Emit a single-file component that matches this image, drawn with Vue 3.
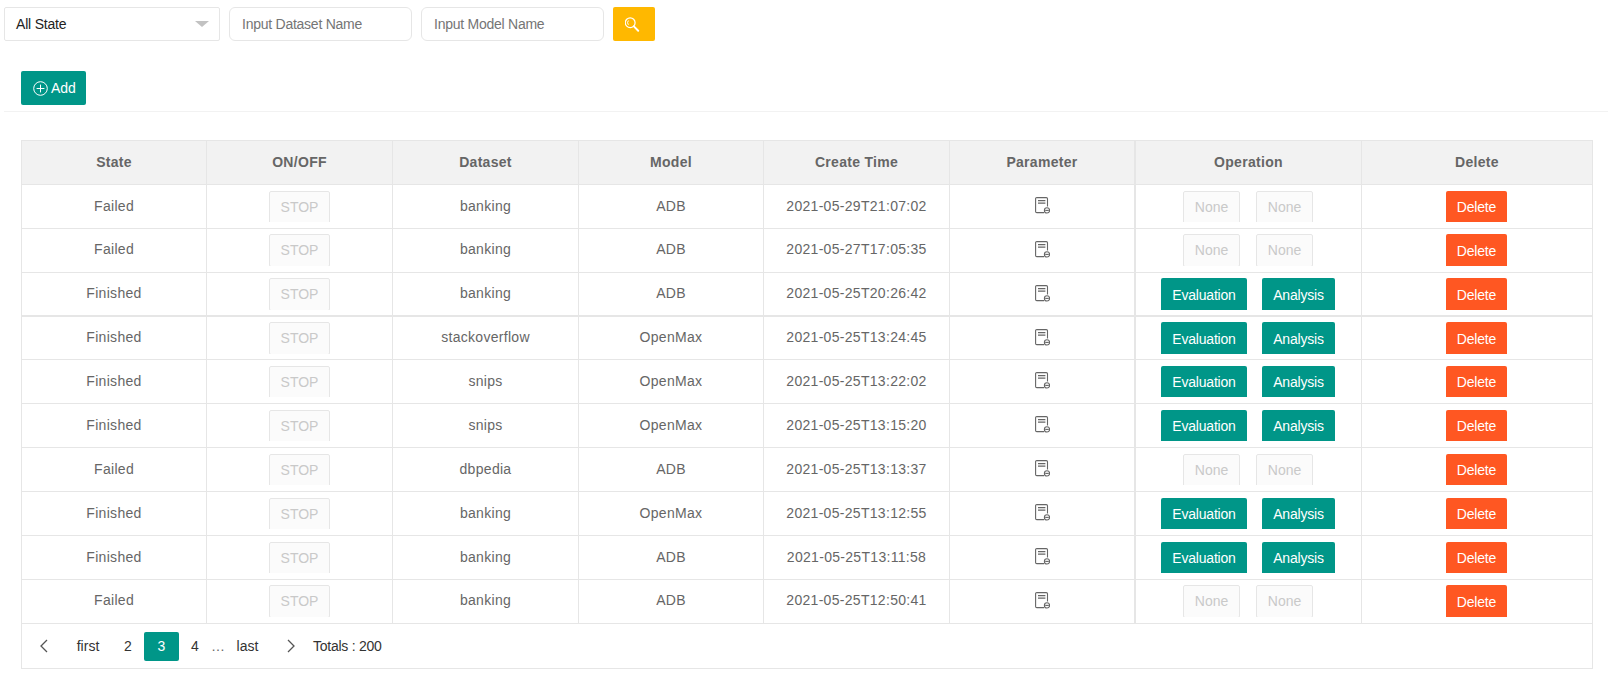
<template>
  <div class="page">
    <div class="search-bar">
      <div class="state-select">
        <span>All State</span>
        <i class="caret"></i>
      </div>
      <input class="text-input" type="text" placeholder="Input Dataset Name" />
      <input class="text-input" type="text" placeholder="Input Model Name" />
      <button class="search-btn" type="button">
        <svg width="18" height="18" viewBox="0 0 18 18" fill="none" stroke="#fff">
          <circle cx="5.2" cy="7.7" r="4.9" stroke-width="1.2" />
          <path d="M8.9 11.4l4.3 4.3" stroke-width="2" stroke-linecap="round" />
          <path d="M3.4 5.6a3.2 3.2 0 0 0 0 4.2" stroke-width="1" />
        </svg>
      </button>
    </div>

    <div class="tool-bar">
      <button class="add-btn" type="button">
        <svg width="15" height="15" viewBox="0 0 15 15" fill="none" stroke="#fff" stroke-width="1">
          <circle cx="7.5" cy="7.5" r="6.8" />
          <path d="M7.5 3.6v7.8M3.6 7.5h7.8" />
        </svg>
        Add
      </button>
    </div>

    <div class="table">
      <div class="row head">
        <div v-for="title in columns" :key="title" class="cell">{{ title }}</div>
      </div>

      <div
        v-for="(job, i) in jobs"
        :key="i"
        class="row"
        :class="{
          thick: i === 2,
          short: i === 3,
          low: i === 0 || (i >= 4 && i <= 8),
          raised: i === 1 || i === 9,
        }"
      >
        <div class="cell">{{ job.state }}</div>
        <div class="cell btn-cell">
          <div class="clip"><button class="btn off stop" type="button">STOP</button></div>
        </div>
        <div class="cell">{{ job.dataset }}</div>
        <div class="cell">{{ job.model }}</div>
        <div class="cell">{{ job.time }}</div>
        <div class="cell icon-cell">
          <svg width="15" height="17" viewBox="0 0 15 17" fill="none" stroke="#666" stroke-width="1.1">
            <path d="M12.5 9.6V1.8a1.2 1.2 0 0 0-1.2-1.2H1.8A1.2 1.2 0 0 0 .6 1.8v12.6a1.2 1.2 0 0 0 1.2 1.2h7.4" />
            <path d="M3 3.6h7.4M3 6.2h7.4" stroke-width="1.3" />
            <circle cx="12" cy="13.4" r="2.6" />
            <path d="M10.2 13.4h3.6" />
          </svg>
        </div>
        <div class="cell btn-cell">
          <div v-if="job.state === 'Finished'" class="clip ops">
            <button class="btn teal eval" type="button">Evaluation</button>
            <button class="btn teal analysis" type="button">Analysis</button>
          </div>
          <div v-else class="clip ops none">
            <button class="btn off none-btn" type="button">None</button>
            <button class="btn off none-btn" type="button">None</button>
          </div>
        </div>
        <div class="cell btn-cell">
          <div class="clip shift"><button class="btn orange" type="button">Delete</button></div>
        </div>
      </div>

      <div class="pager">
        <a class="pg prev">
          <svg width="10" height="16" viewBox="0 0 10 16" fill="none" stroke="#555" stroke-width="1.3"><path d="M8 2L2 8l6 6" /></svg>
        </a>
        <a class="pg first-link">first</a>
        <a class="pg num before">2</a>
        <a class="pg current">3</a>
        <a class="pg num after">4</a>
        <span class="dots">…</span>
        <a class="pg last-link">last</a>
        <a class="pg next">
          <svg width="10" height="16" viewBox="0 0 10 16" fill="none" stroke="#555" stroke-width="1.3"><path d="M2 2l6 6-6 6" /></svg>
        </a>
        <span class="totals">Totals : 200</span>
      </div>
    </div>
  </div>
</template>

<script setup>
const columns = ["State", "ON/OFF", "Dataset", "Model", "Create Time", "Parameter", "Operation", "Delete"];

const jobs = [
  { state: "Failed", dataset: "banking", model: "ADB", time: "2021-05-29T21:07:02" },
  { state: "Failed", dataset: "banking", model: "ADB", time: "2021-05-27T17:05:35" },
  { state: "Finished", dataset: "banking", model: "ADB", time: "2021-05-25T20:26:42" },
  { state: "Finished", dataset: "stackoverflow", model: "OpenMax", time: "2021-05-25T13:24:45" },
  { state: "Finished", dataset: "snips", model: "OpenMax", time: "2021-05-25T13:22:02" },
  { state: "Finished", dataset: "snips", model: "OpenMax", time: "2021-05-25T13:15:20" },
  { state: "Failed", dataset: "dbpedia", model: "ADB", time: "2021-05-25T13:13:37" },
  { state: "Finished", dataset: "banking", model: "OpenMax", time: "2021-05-25T13:12:55" },
  { state: "Finished", dataset: "banking", model: "ADB", time: "2021-05-25T13:11:58" },
  { state: "Failed", dataset: "banking", model: "ADB", time: "2021-05-25T12:50:41" },
];
</script>

<style>
body {
  background: #fff;
}
</style>

<style scoped>
.page {
  font-family: "Liberation Sans", Arial, sans-serif;
  font-size: 14px;
  color: #666;
  height: 682px;
  overflow: hidden;
}

button {
  font-family: inherit;
  border: none;
  padding: 0;
}

.search-bar {
  display: flex;
  align-items: center;
  gap: 9px;
  padding: 7px 0 0 4px;
}

.state-select {
  position: relative;
  box-sizing: border-box;
  width: 216px;
  height: 34px;
  line-height: 32px;
  padding-left: 11px;
  letter-spacing: -0.2px;
  border: 1px solid #e6e6e6;
  border-radius: 2px;
  color: #222;
}

.caret {
  position: absolute;
  right: 10px;
  top: 13px;
  border-style: solid;
  border-width: 6px 7px 0;
  border-color: #c2c2c2 transparent transparent;
}

.text-input {
  box-sizing: border-box;
  width: 183px;
  height: 34px;
  padding: 0 12px;
  font-family: inherit;
  font-size: 14px;
  letter-spacing: -0.25px;
  border: 1px solid #e6e6e6;
  border-radius: 6px;
  outline: none;
}

.text-input::placeholder {
  color: #757575;
}

.search-btn {
  width: 42px;
  height: 34px;
  background: #ffb800;
  border-radius: 2px;
  display: flex;
  align-items: center;
  justify-content: center;
}

.tool-bar {
  margin: 30px 0 0 4px;
  padding: 0 0 6px 17px;
  border-bottom: 1px solid #f2f2f2;
}

.add-btn {
  display: flex;
  align-items: center;
  gap: 3px;
  box-sizing: border-box;
  width: 65px;
  height: 34px;
  padding-left: 12px;
  font-size: 14px;
  letter-spacing: -0.1px;
  color: #fff;
  background: #009688;
  border-radius: 2px;
}

.table {
  box-sizing: border-box;
  width: 1572px;
  margin: 28px 0 0 21px;
  border: 1px solid #e6e6e6;
}

.row {
  display: grid;
  grid-template-columns: 185px 186px 186px 185px 186px 186px 226px 230px;
  height: 44px;
  box-sizing: border-box;
  border-bottom: 1px solid #e6e6e6;
  letter-spacing: 0.3px;
}

.row.thick {
  border-bottom-width: 2px;
}

.row.short {
  height: 43px;
}

.cell {
  display: flex;
  align-items: center;
  justify-content: center;
  box-sizing: border-box;
  border-right: 1px solid #e6e6e6;
  padding-bottom: 2px;
}

.raised .cell {
  padding-bottom: 4px;
}

.cell:last-child {
  border-right: none;
}

.cell:nth-child(6) {
  border-right-width: 2px;
}

.head {
  background: #f2f2f2;
  font-weight: bold;
  color: #666;
}

.raised .icon-cell {
  padding-bottom: 2px;
}

.btn-cell,
.raised .btn-cell {
  align-items: flex-start;
  padding: 5px 0 0;
  letter-spacing: 0;
}

.low .btn-cell {
  padding-top: 6px;
}

.clip {
  height: 32px;
  overflow: hidden;
}

.low .clip {
  height: 31px;
}

.ops {
  display: flex;
  gap: 15px;
  margin-right: 1px;
}

.ops.none {
  gap: 16px;
}

.shift {
  margin-right: 1px;
}

.btn {
  display: block;
  box-sizing: border-box;
  height: 33px;
  font-size: 14px;
  letter-spacing: -0.2px;
  line-height: 32px;
  border-radius: 2px;
  color: #fff;
}

.low .teal,
.low .orange {
  height: 31px;
  line-height: 30px;
}

.off {
  background: #fbfbfb;
  border: 1px solid #e6e6e6;
  color: #c9c9c9;
  letter-spacing: 0;
  line-height: 31px;
}

.stop {
  width: 61px;
}

.none-btn {
  width: 57px;
}

.teal {
  background: #009688;
  border-radius: 2px 2px 0 0;
}

.eval {
  width: 86px;
}

.analysis {
  width: 73px;
}

.orange {
  width: 61px;
  background: #ff5722;
  border-radius: 2px 2px 0 0;
}

.pager {
  display: flex;
  align-items: center;
  height: 44px;
  color: #333;
}

.pg {
  display: flex;
  align-items: center;
  justify-content: center;
  flex: none;
  height: 29px;
}

.prev {
  width: 44px;
}

.first-link {
  width: 44px;
}

.num {
  box-sizing: border-box;
  width: 34px;
}

.num.before {
  padding-left: 2px;
}

.num.after {
  width: 32px;
}

.current {
  width: 35px;
  color: #fff;
  background: #009688;
  border-radius: 2px;
}

.dots {
  width: 14px;
  text-align: center;
  color: #666;
}

.last-link {
  width: 45px;
}

.next {
  width: 42px;
}

.totals {
  margin-left: 1px;
  letter-spacing: -0.25px;
}
</style>
